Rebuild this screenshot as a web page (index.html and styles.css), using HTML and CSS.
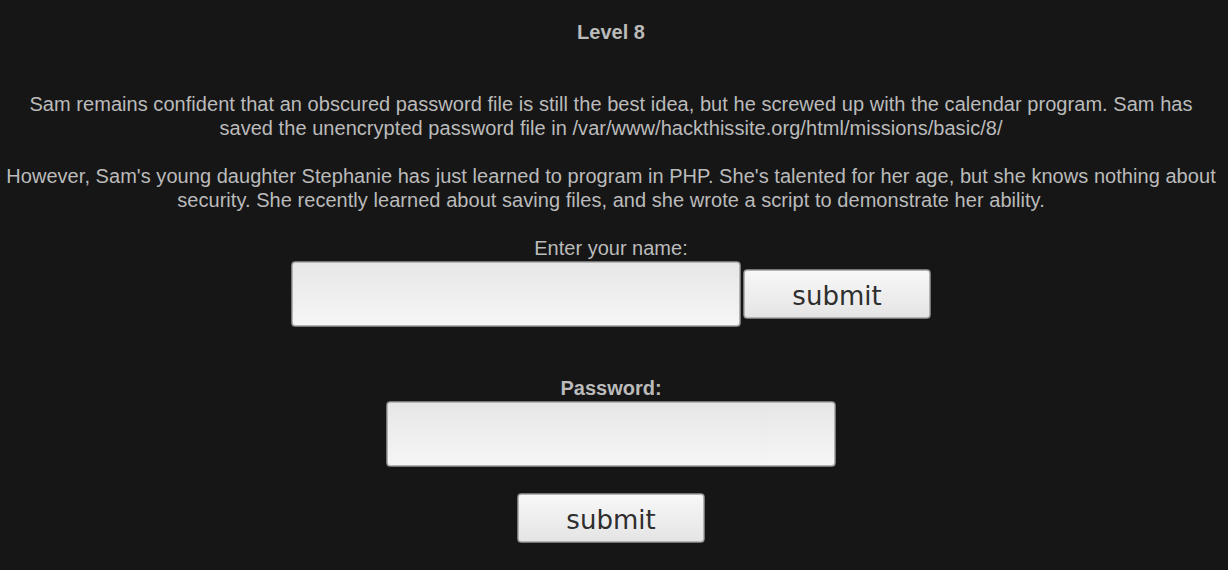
FILE: index.html
```html
<!DOCTYPE html>
<html>
<head>
<meta charset="utf-8">
<link rel="stylesheet" href="styles.css">
</head>
<body>
<div class="page">
  <div class="title">Level 8</div>
  <p class="text">Sam remains confident that an obscured password file is still the best idea, but he screwed up with the calendar program. Sam has saved the unencrypted password file in /var/www/hackthissite.org/html/missions/basic/8/</p>
  <p class="text gap">However, Sam's young daughter Stephanie has just learned to program in PHP. She's talented for her age, but she knows nothing about security. She recently learned about saving files, and she wrote a script to demonstrate her ability.</p>
  <form class="form-name">
    <div class="label">Enter your name:</div>
    <div class="row">
      <input class="field" type="text">
      <button class="btn" type="button">submit</button>
    </div>
  </form>
  <form class="form-pass">
    <div class="label bold">Password:</div>
    <input class="field" type="password">
    <button class="btn btn-pass" type="button">submit</button>
  </form>
</div>
</body>
</html>
```
FILE: styles.css
```css
html, body {
  margin: 0;
  padding: 0;
  background: #161616;
}
.page {
  padding: 20px 8px 0 2px;
  font-family: "Liberation Sans", Arial, sans-serif;
  color: #bbbbbb;
  text-align: center;
  font-size: 20px;
  line-height: 24px;
}
.title {
  font-weight: bold;
}
.text {
  margin: 48px 0 0 0;
  letter-spacing: 0.045px;
}
.text.gap {
  margin-top: 24px;
}
.form-name {
  margin: 24px 0 0 0;
  display: flex;
  flex-direction: column;
  align-items: center;
}
.row {
  display: flex;
  align-items: center;
  gap: 2px;
  margin-top: 1px;
}
.field {
  box-sizing: border-box;
  width: 450px;
  height: 66px;
  border: 1px solid #767676;
  box-shadow: inset 0 0 0 1px #b4b4b4;
  border-radius: 4px;
  background: linear-gradient(#e6e6e6, #f6f6f6);
  margin: 0;
  padding: 0 8px;
  font-size: 20px;
  outline: none;
}
.btn {
  box-sizing: border-box;
  width: 188px;
  height: 50px;
  border: 1px solid #767676;
  box-shadow: inset 0 0 0 1px #b4b4b4;
  border-radius: 4px;
  background: linear-gradient(#f8f8f8, #e4e4e4);
  font-family: "DejaVu Sans", sans-serif;
  font-size: 26px;
  color: #2e2e2e;
  margin: 0;
  padding: 4px 0 0 0;
  cursor: pointer;
}
.form-pass {
  margin: 49px 0 0 0;
  display: flex;
  flex-direction: column;
  align-items: center;
}
.form-pass .field {
  margin-top: 1px;
}
.btn-pass {
  margin-top: 26px;
}
.bold {
  font-weight: bold;
}
```
